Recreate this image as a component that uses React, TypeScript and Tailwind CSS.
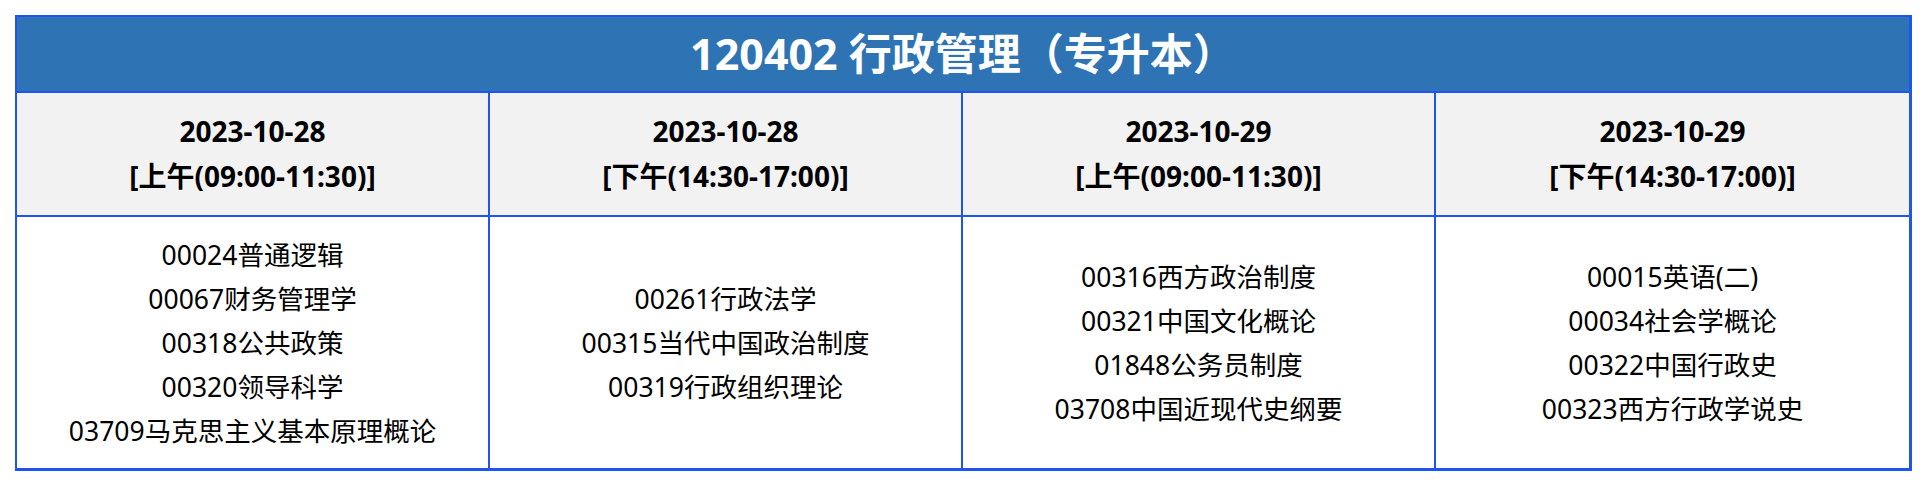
const sessions = [
  {
    date: "2023-10-28",
    time: "[上午(09:00-11:30)]",
    courses: ["00024普通逻辑", "00067财务管理学", "00318公共政策", "00320领导科学", "03709马克思主义基本原理概论"],
  },
  {
    date: "2023-10-28",
    time: "[下午(14:30-17:00)]",
    courses: ["00261行政法学", "00315当代中国政治制度", "00319行政组织理论"],
  },
  {
    date: "2023-10-29",
    time: "[上午(09:00-11:30)]",
    courses: ["00316西方政治制度", "00321中国文化概论", "01848公务员制度", "03708中国近现代史纲要"],
  },
  {
    date: "2023-10-29",
    time: "[下午(14:30-17:00)]",
    courses: ["00015英语(二)", "00034社会学概论", "00322中国行政史", "00323西方行政学说史"],
  },
];

export default function App() {
  return (
    <div
      className="bg-white w-[1928px] h-[488px] pt-[15px] pl-[15px]"
      style={{ fontFamily: '"Noto Sans", "Noto Sans CJK SC", sans-serif' }}
    >
      <div className="w-[1897px] border-t-2 border-l-2 border-r-[3px] border-b-[3px] border-[#1e55ee]">
        {/* 标题 */}
        <div className="h-[76px] bg-[#2e74b5] border-b-2 border-[#1e55ee] flex items-center justify-center text-white text-[43px] font-bold">
          120402 行政管理（专升本）
        </div>

        {/* 日期 */}
        <div className="grid grid-cols-4">
          {sessions.map((s, i) => (
            <div
              key={i}
              className={
                "h-[124px] bg-[#f2f2f2] border-b-2 border-[#1e55ee] flex flex-col items-center justify-center text-[28px] font-bold leading-[45px] text-black " +
                (i < 3 ? "border-r-2" : "")
              }
            >
              <div>{s.date}</div>
              <div>{s.time}</div>
            </div>
          ))}
        </div>

        {/* 科目 */}
        <div className="grid grid-cols-4">
          {sessions.map((s, i) => (
            <div
              key={i}
              className={
                "h-[251px] flex flex-col items-center justify-center text-[26.5px] leading-[44px] text-black " +
                (i < 3 ? "border-r-2 border-[#1e55ee]" : "")
              }
            >
              {s.courses.map((c) => (
                <div key={c}>{c}</div>
              ))}
            </div>
          ))}
        </div>
      </div>
    </div>
  );
}
